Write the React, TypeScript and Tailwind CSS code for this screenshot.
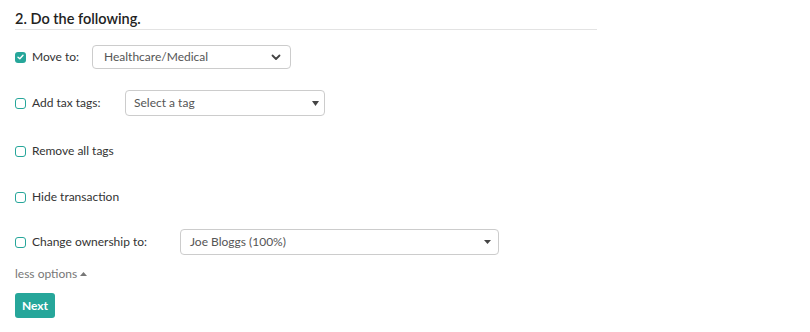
import React from "react";

function Box({ checked }: { checked?: boolean }) {
  if (checked) {
    return (
      <span className="flex h-[11px] w-[11px] shrink-0 items-center justify-center rounded-[3px] bg-[#26a69a]">
        <svg width="7" height="6" viewBox="0 0 7 6" fill="none">
          <path d="M1 3.2 L2.8 4.8 L6 1.2" stroke="white" strokeWidth="1.4" strokeLinecap="round" strokeLinejoin="round" />
        </svg>
      </span>
    );
  }
  return <span className="block h-[11px] w-[11px] shrink-0 rounded-[3px] border-[1.5px] border-[#26a69a] bg-white" />;
}

export default function App() {
  return (
    <div className="min-h-[332px] w-[810px] bg-white pl-[15px] pt-[9px] text-[12px] text-[#333]" style={{ fontFamily: "Lato, 'Noto Sans', sans-serif" }}>
      <div className="w-[582px] border-b border-[#e3e3e3]">
        <h2 className="text-[14.5px] font-semibold leading-[20px] text-[#222]">2. Do the following.</h2>
      </div>

      <div className="mt-[15px] flex h-[24px] items-center">
        <Box checked />
        <span className="ml-[6px] w-[60px]">Move to:</span>
        <div className="flex h-[24px] w-[199px] items-center justify-between rounded-[4px] border border-[#ccc] pl-[11px] pr-[9px] text-[#555]">
          <span>Healthcare/Medical</span>
          <svg width="10" height="7" viewBox="0 0 10 7" fill="none">
            <path d="M1.5 1.5 L5 5 L8.5 1.5" stroke="#444" strokeWidth="1.8" strokeLinecap="round" strokeLinejoin="round" />
          </svg>
        </div>
      </div>

      <div className="mt-[21px] flex h-[26px] items-center">
        <Box />
        <span className="ml-[6px] w-[93px]">Add tax tags:</span>
        <div className="flex h-[26px] w-[200px] items-center justify-between rounded-[4px] border border-[#ccc] pl-[8px] pr-[5px] text-[#555]">
          <span>Select a tag</span>
          <svg width="7" height="5" viewBox="0 0 7 5">
            <path d="M0 0 H7 L3.5 5 Z" fill="#444" />
          </svg>
        </div>
      </div>

      <div className="mt-[22px] flex h-[26px] items-center">
        <Box />
        <span className="ml-[6px]">Remove all tags</span>
      </div>

      <div className="mt-[20px] flex h-[26px] items-center">
        <Box />
        <span className="ml-[6px]">Hide transaction</span>
      </div>

      <div className="mt-[19px] flex h-[26px] items-center">
        <Box />
        <span className="ml-[6px] w-[148px]">Change ownership to:</span>
        <div className="flex h-[26px] w-[319px] items-center justify-between rounded-[4px] border border-[#ccc] pl-[9px] pr-[7px] text-[#555]">
          <span>Joe Bloggs (100%)</span>
          <svg width="7" height="4" viewBox="0 0 7 4">
            <path d="M0 0 H7 L3.5 4 Z" fill="#444" />
          </svg>
        </div>
      </div>

      <div className="mt-[11px] flex h-[16px] items-center text-[#777]">
        <span>less options</span>
        <svg className="ml-[3px]" width="7" height="4" viewBox="0 0 7 4">
          <path d="M0 4 H7 L3.5 0 Z" fill="#777" />
        </svg>
      </div>

      <button className="mt-[11px] flex h-[25px] w-[40px] items-center justify-center rounded-[3px] bg-[#26a69a] text-[12px] font-bold text-white">
        Next
      </button>
    </div>
  );
}
